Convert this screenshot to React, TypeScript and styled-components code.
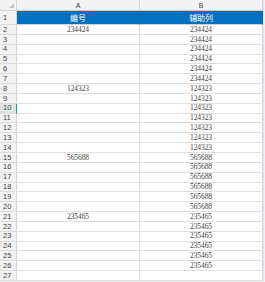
import React from "react";
import styled, { createGlobalStyle, css } from "styled-components";

const Global = createGlobalStyle`
  html, body { margin: 0; padding: 0; background: #ffffff; overflow: hidden; }
  #root { width: 265px; height: 282px; overflow: hidden; }
`;

const Sheet = styled.div`
  display: flex;
  flex-direction: column;
  width: 265px;
  height: 282px;
  background: #f4f4f4;
`;

const Row = styled.div<{ $h: number }>`
  display: grid;
  grid-template-columns: 17px 123px 123px 2px;
  height: ${(p) => p.$h}px;
  flex: none;
`;

const Corner = styled.div`
  background: #f3f3f3;
  border-right: 1px solid #d4d4d4;
  border-bottom: 1px solid #d4d4d4;
  box-sizing: border-box;
  position: relative;
  &::after {
    content: "";
    position: absolute;
    right: 2px;
    bottom: 2px;
    border-left: 5px solid transparent;
    border-bottom: 5px solid #c8c8c8;
  }
`;

const ColHead = styled.div`
  background: #f3f3f3;
  border-right: 1px solid #d4d4d4;
  border-bottom: 1px solid #c8c8c8;
  box-sizing: border-box;
  display: flex;
  align-items: center;
  justify-content: center;
  font-family: "Liberation Sans", Arial, sans-serif;
  font-size: 7px;
  color: #444;
`;

const RowNum = styled.div<{ $sel?: boolean }>`
  background: ${(p) => (p.$sel ? "#e1e1e1" : "#f3f3f3")};
  border-right: 1px solid ${(p) => (p.$sel ? "#21a366" : "#d4d4d4")};
  border-bottom: 1px solid #dcdcdc;
  box-sizing: border-box;
  display: flex;
  align-items: center;
  padding-left: 3px;
  font-family: "Liberation Sans", Arial, sans-serif;
  font-size: 7.5px;
  color: ${(p) => (p.$sel ? "#217346" : "#444")};
  line-height: 1;
`;

const Cell = styled.div<{ $head?: boolean }>`
  box-sizing: border-box;
  border-right: 1px solid #dedede;
  border-bottom: 1px solid #dedede;
  background: #ffffff;
  display: flex;
  align-items: center;
  justify-content: center;
  font-family: "Liberation Serif", "Noto Sans CJK SC", serif;
  font-size: 7.5px;
  color: #454545;
  line-height: 1;
  letter-spacing: -0.1px;
  ${(p) =>
    p.$head &&
    css`
      background: #0070c0;
      border-right: 1px solid #0a6bb0;
      border-bottom: 1px solid #d0d0d0;
      color: #ffffff;
      font-family: "Noto Sans CJK SC", sans-serif;
      font-size: 8px;
      font-weight: 400;
    `}
`;

const Edge = styled.div`
  background: #f0f0f4;
  border-left: 1px solid #e2e2ea;
  box-sizing: border-box;
`;

const colA: Record<number, string> = { 2: "234424", 8: "124323", 15: "565688", 21: "235465" };

function colB(n: number): string {
  if (n >= 2 && n <= 7) return "234424";
  if (n >= 8 && n <= 14) return "124323";
  if (n >= 15 && n <= 20) return "565688";
  if (n >= 21 && n <= 26) return "235465";
  return "";
}

export default function App() {
  const rows = Array.from({ length: 26 }, (_, i) => i + 2);
  return (
    <>
      <Global />
      <Sheet>
        <Row $h={11}>
          <Corner />
          <ColHead>A</ColHead>
          <ColHead>B</ColHead>
          <Edge />
        </Row>
        <Row $h={14}>
          <RowNum>1</RowNum>
          <Cell $head>编号</Cell>
          <Cell $head>辅助列</Cell>
          <Edge />
        </Row>
        {rows.map((n) => (
          <Row key={n} $h={9.85}>
            <RowNum $sel={n === 10}>{n}</RowNum>
            <Cell>{colA[n] ?? ""}</Cell>
            <Cell>{colB(n)}</Cell>
            <Edge />
          </Row>
        ))}
      </Sheet>
    </>
  );
}
